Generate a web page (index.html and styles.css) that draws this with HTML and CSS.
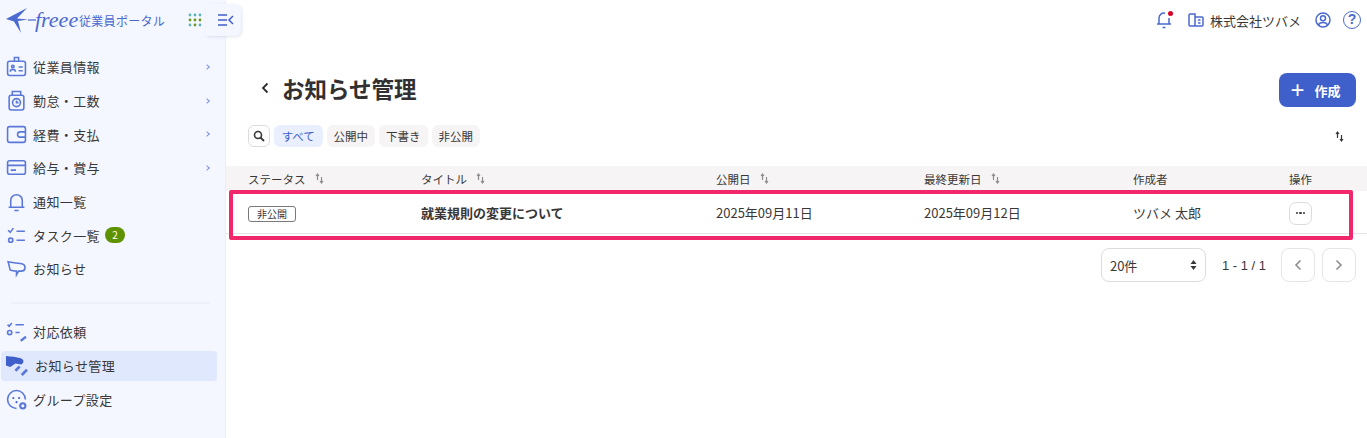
FILE: index.html
```html
<!DOCTYPE html>
<html lang="ja">
<head>
  <meta charset="UTF-8">
  <title>お知らせ管理</title>
  <link rel="stylesheet" href="styles.css">
</head>
<body>
<div class="app">
  <aside class="sidebar">
    <div class="brand">
      <svg class="brand-bird" width="32" height="30" viewBox="0 0 32 30" fill="none"><path d="M0 14 L21 3 L11 13.500 L22 14.500 L12 16 L15 28 L8 16.500 Z" fill="#4a6ad0"/><path d="M22 15h8" stroke="#4a6ad0" stroke-width="1.200"/></svg>
      <span class="brand-name">freee</span>
      <span class="brand-text">従業員ポータル</span>
      <svg class="brand-apps" width="14" height="14" viewBox="0 0 14 14">
        <g fill="#5bb5b8"><circle cx="2" cy="2" r="1.400"/><circle cx="7" cy="2" r="1.400"/><circle cx="12" cy="2" r="1.400"/></g>
        <g fill="#6c9a1e"><circle cx="2" cy="7" r="1.400"/><circle cx="7" cy="7" r="1.400"/><circle cx="12" cy="7" r="1.400"/></g>
        <g fill="#5bb5b8"><circle cx="2" cy="12" r="1.400"/></g><g fill="#6c9a1e"><circle cx="7" cy="12" r="1.400"/></g><g fill="#5bb5b8"><circle cx="12" cy="12" r="1.400"/></g>
      </svg>
    </div>
    <nav class="nav">
      <a class="nav-item">
        <svg class="nav-icon" viewBox="0 0 20 20"><rect x="1.500" y="5" width="17" height="13.500" rx="2"/><path d="M8 5V1.500h4V5"/><circle cx="6.500" cy="10" r="1.200"/><path d="M4 15c.3-3 4.700-3 5 0M12 10.500h4M12 14h4"/></svg>
        <span>従業員情報</span><i class="chev"></i>
      </a>
      <a class="nav-item">
        <svg class="nav-icon" viewBox="0 0 20 20"><rect x="3" y="5" width="14" height="14" rx="2"/><path d="M6 5V1.500h8V5"/><circle cx="10" cy="12" r="3.800"/><path d="M10 10v2h2"/></svg>
        <span>勤怠・工数</span><i class="chev"></i>
      </a>
      <a class="nav-item">
        <svg class="nav-icon" viewBox="0 0 20 20"><rect x="1.500" y="2.500" width="17" height="15" rx="2"/><path d="M18.500 7.500h-5a2.500 2.500 0 0 0 0 5h5"/></svg>
        <span>経費・支払</span><i class="chev"></i>
      </a>
      <a class="nav-item">
        <svg class="nav-icon" viewBox="0 0 20 20"><rect x="1.500" y="3.500" width="17" height="13" rx="2"/><path d="M1.500 8h17M4.500 12.500h5"/></svg>
        <span>給与・賞与</span><i class="chev"></i>
      </a>
      <a class="nav-item">
        <svg class="nav-icon" viewBox="0 0 20 20"><path d="M2.500 15.500h15M4.500 15.500V9a5.500 5.500 0 0 1 11 0v6.500M8 18.500h4"/></svg>
        <span>通知一覧</span>
      </a>
      <a class="nav-item">
        <svg class="nav-icon" viewBox="0 0 20 20"><path d="M2 5l2 2 3-4M10 6h8M10 14.500h8"/><circle cx="4.500" cy="14.500" r="2"/></svg>
        <span>タスク一覧</span><b class="count">2</b>
      </a>
      <a class="nav-item">
        <svg class="nav-icon" viewBox="0 0 20 20"><path d="M2 3.500c5 1 10 1.500 13 2 2 .4 3.500 2 3 4.500-.3 1.600-2 2.500-3.500 2.500H12l-2 3.500v-3.500c-3 0-5-.5-6-1z"/></svg>
        <span>お知らせ</span>
      </a>
      <hr class="nav-divider">
      <a class="nav-item">
        <svg class="nav-icon" viewBox="0 0 20 20"><path d="M1.500 3.500l1.500 1.500 2.500-3M9 3.500h8M9 11h4"/><path d="M14 19l5-4" stroke-width="2.200"/><circle cx="3.500" cy="11" r="2"/></svg>
        <span>対応依頼</span>
      </a>
      <a class="nav-item active">
        <svg class="nav-icon" viewBox="0 0 20 20"><path class="solid" d="M0 1c5 .5 10 1 14 2 2 .6 3 2 2.500 4-.4 1-1 1.500-2 2L9 8 4 11.500 0 10z"/><path d="M9 15l4-4M15 19l5-5" stroke-width="2.500"/></svg>
        <span>お知らせ管理</span>
      </a>
      <a class="nav-item">
        <svg class="nav-icon" viewBox="0 0 20 20"><path d="M18.500 10A8.500 8.500 0 1 0 10 18.500"/><circle cx="7" cy="8.500" r="1" class="solid"/><circle cx="12.500" cy="8.500" r="1" class="solid"/><circle cx="10" cy="12.500" r="1" class="solid"/><circle cx="16" cy="16" r="2.500" stroke-width="2"/></svg>
        <span>グループ設定</span>
      </a>
    </nav>
  </aside>

  <main class="main">
    <header class="topbar">
      <span class="bell">
        <svg class="top-icon" width="16" height="18" viewBox="0 0 16 18"><path d="M1 13h14M3 13V7a5 5 0 0 1 6-4.800M13 7v6M6.500 16.500h3"/></svg>
        <i class="bell-dot"></i>
      </span>
      <span class="company">
        <svg class="top-icon" width="16" height="14" viewBox="0 0 16 14"><path d="M7 1H2a1 1 0 0 0-1 1v10a1 1 0 0 0 1 1h5zM7 4h7a1 1 0 0 1 1 1v7a1 1 0 0 1-1 1H7M10 7h2.500M10 10h2.500"/></svg>
        株式会社ツバメ
      </span>
      <svg class="top-icon user" width="16" height="16" viewBox="0 0 16 16"><circle cx="8" cy="8" r="7"/><circle cx="8" cy="6.200" r="2.500"/><path d="M3.500 13c1-3.500 8-3.500 9 0"/></svg>
      <span class="help">?</span>
    </header>

    <div class="title-row">
      <div class="title">
        <svg width="8" height="12" viewBox="0 0 8 12" fill="none"><path d="M6.500 1.500L2 6l4.500 4.500" stroke="#2f2c2c" stroke-width="1.800"/></svg>
        <h1>お知らせ管理</h1>
      </div>
      <button class="create"><span class="plus">+</span>作成</button>
    </div>

    <div class="filter-row">
      <div class="filters">
        <span class="search">
          <svg width="12" height="12" viewBox="0 0 12 12" fill="none"><circle cx="5" cy="5" r="3.500" stroke="#3a3737" stroke-width="1.600"/><path d="M7.500 7.500L11 11" stroke="#3a3737" stroke-width="1.800"/></svg>
        </span>
        <span class="chip current">すべて</span>
        <span class="chip">公開中</span>
        <span class="chip">下書き</span>
        <span class="chip">非公開</span>
      </div>
      <svg class="sort dark" width="9" height="11" viewBox="0 0 9 11"><path d="M2.500 7V1.500M1 3l1.500-2L4 3M6.500 4v6M5 8l1.500 2L8 8"/></svg>
    </div>

    <div class="table">
      <div class="thead">
        <div class="th">ステータス<svg class="sort" width="9" height="11" viewBox="0 0 9 11"><path d="M2.500 7V1.500M1 3l1.500-2L4 3M6.500 4v6M5 8l1.500 2L8 8"/></svg></div>
        <div class="th">タイトル<svg class="sort" width="9" height="11" viewBox="0 0 9 11"><path d="M2.500 7V1.500M1 3l1.500-2L4 3M6.500 4v6M5 8l1.500 2L8 8"/></svg></div>
        <div class="th">公開日<svg class="sort" width="9" height="11" viewBox="0 0 9 11"><path d="M2.500 7V1.500M1 3l1.500-2L4 3M6.500 4v6M5 8l1.500 2L8 8"/></svg></div>
        <div class="th">最終更新日<svg class="sort" width="9" height="11" viewBox="0 0 9 11"><path d="M2.500 7V1.500M1 3l1.500-2L4 3M6.500 4v6M5 8l1.500 2L8 8"/></svg></div>
        <div class="th">作成者</div>
        <div class="th">操作</div>
      </div>
      <div class="tbody">
        <div class="td"><span class="status">非公開</span></div>
        <div class="td strong">就業規則の変更について</div>
        <div class="td">2025年09月11日</div>
        <div class="td">2025年09月12日</div>
        <div class="td">ツバメ 太郎</div>
        <div class="td"><button class="more"><i></i><i></i><i></i></button></div>
      </div>
    </div>

    <div class="pager">
      <div class="per-page">20件
        <svg width="7" height="12" viewBox="0 0 7 12" fill="#3a3737"><path d="M3.500 1L6.500 5h-6zM3.500 11L.5 7h6z"/></svg>
      </div>
      <span class="range">1 - 1 / 1</span>
      <button class="page-btn"><svg width="8" height="12" viewBox="0 0 8 12" fill="none"><path d="M6.500 1.500L2 6l4.500 4.500" stroke="#8f8c8c" stroke-width="1.600"/></svg></button>
      <button class="page-btn"><svg width="8" height="12" viewBox="0 0 8 12" fill="none"><path d="M1.500 1.500L6 6l-4.500 4.500" stroke="#8f8c8c" stroke-width="1.600"/></svg></button>
    </div>
  </main>
</div>

<!-- sidebar collapse tab sits over the sidebar edge -->
<div class="collapse-tab">
  <svg width="16" height="12" viewBox="0 0 16 12" fill="none" stroke="#3f5fcb" stroke-width="1.500"><path d="M0 1h9M0 6h9M0 11h9M15 2l-4 4 4 4"/></svg>
</div>
<!-- annotation frame drawn over the table row -->
<div class="highlight"></div>
</body>
</html>
```

FILE: styles.css
```css
* {
  box-sizing: border-box;
}

body {
  margin: 0;
  height: 438px;
  overflow: hidden;
  background: #fff;
  color: #3a3737;
  font-family: "Noto Sans CJK JP", "Noto Sans", sans-serif;
  font-size: 13px;
  position: relative;
}

button {
  font-family: inherit;
}

.app {
  display: flex;
  height: 100%;
}

/* sidebar */
.sidebar {
  width: 226px;
  flex: none;
  background: #f4f7ff;
  border-right: 1px solid #ebeef6;
}

.brand {
  display: flex;
  align-items: center;
  height: 40px;
  padding-left: 6px;
  color: #4a6ad0;
}

.brand-bird {
  flex: none;
  margin-right: -3px;
}

.brand-name {
  width: 44px;
  font-family: "Liberation Serif", serif;
  font-style: italic;
  font-size: 22px;
  line-height: 24px;
  color: #4a6ad0;
}

.brand-text {
  font-size: 12px;
  letter-spacing: 0.300px;
  color: #4a6ad0;
  white-space: nowrap;
}

.brand-apps {
  margin-left: 23px;
  flex: none;
}

.nav {
  display: flex;
  flex-direction: column;
  padding: 10px 0 0 1px;
}

.nav-item {
  position: relative;
  display: flex;
  align-items: center;
  height: 33.700px;
  width: 216px;
  padding-left: 5px;
  border-radius: 4px;
  letter-spacing: 0.400px;
  color: #3a3737;
}

.nav-item span {
  white-space: nowrap;
}

.nav-icon {
  width: 21px;
  height: 21px;
  flex: none;
  margin-right: 6px;
  fill: none;
  stroke: #5a78d8;
  stroke-width: 1.500;
  overflow: visible;
}

.nav-icon .solid {
  fill: #3f5fcb;
  stroke: none;
}

.chev {
  position: absolute;
  right: 8px;
  width: 4px;
  height: 4px;
  border-top: 1.500px solid #7c93e0;
  border-right: 1.500px solid #7c93e0;
  transform: rotate(45deg);
}

.count {
  margin-left: 5px;
  width: 20px;
  height: 16px;
  border-radius: 8px;
  background: #5f9200;
  color: #fff;
  font-size: 10px;
  font-weight: 400;
  line-height: 16px;
  text-align: center;
  letter-spacing: 0;
}

.nav-divider {
  width: 198px;
  height: 2px;
  margin: 16px 0 11px 10px;
  border: 0;
  background: #ebeff9;
}

.nav-item.active {
  background: #dfe8fd;
  height: 30px;
  margin: 2px 0;
}

.nav-item.active span {
  margin-left: 2px;
}

/* header area */
.main {
  flex: 1;
  min-width: 0;
}

.topbar {
  display: flex;
  align-items: center;
  justify-content: flex-end;
  height: 40px;
  padding-right: 6px;
  font-size: 13px;
}

.top-icon {
  fill: none;
  stroke: #4a6ad0;
  stroke-width: 1.500;
  flex: none;
}

.bell {
  position: relative;
  display: flex;
  margin-right: 16px;
}

.bell-dot {
  position: absolute;
  top: 0;
  right: -1px;
  width: 5px;
  height: 5px;
  border-radius: 50%;
  background: #d7002a;
}

.company {
  display: flex;
  align-items: center;
  gap: 6px;
  margin-right: 14px;
  white-space: nowrap;
}

.user {
  margin-right: 12px;
}

.help {
  width: 18px;
  height: 18px;
  border: 1.800px solid #4a6ad0;
  border-radius: 50%;
  color: #4a6ad0;
  font-family: "Liberation Sans", sans-serif;
  font-size: 14px;
  font-weight: 700;
  line-height: 15px;
  text-align: center;
}

.title-row {
  display: flex;
  align-items: center;
  justify-content: space-between;
  height: 34px;
  margin-top: 33px;
  padding: 0 11px 0 35px;
}

.title {
  display: flex;
  align-items: center;
  gap: 13px;
  margin-bottom: 4px;
}

.title h1 {
  margin: 0;
  font-size: 22.500px;
  font-weight: 700;
  line-height: 34px;
  color: #323030;
}

.create {
  display: flex;
  align-items: center;
  justify-content: center;
  width: 77px;
  height: 34px;
  padding: 0 4px 0 0;
  border: 0;
  border-radius: 8px;
  background: #3f5fcb;
  color: #fff;
  font-size: 13px;
  font-weight: 700;
}

.plus {
  margin-right: 10px;
  font-family: "Liberation Sans", sans-serif;
  font-size: 24px;
  font-weight: 400;
  line-height: 24px;
}

.filter-row {
  display: flex;
  align-items: center;
  justify-content: space-between;
  height: 22px;
  margin-top: 18px;
  padding: 0 23px 0 22px;
}

.filters {
  display: flex;
  align-items: center;
  gap: 4px;
}

.search {
  display: flex;
  align-items: center;
  justify-content: center;
  width: 22px;
  height: 22px;
  border: 1px solid #dedbdb;
  border-radius: 6px;
}

.chip {
  width: 48.500px;
  height: 22px;
  border-radius: 6px;
  background: #f6f4f4;
  font-size: 11.500px;
  line-height: 22px;
  text-align: center;
  white-space: nowrap;
}

.chip.current {
  background: #e9effe;
  color: #3f5fcb;
}

.sort {
  margin-left: 9px;
  fill: none;
  stroke: #8f8c8c;
  stroke-width: 1.200;
  flex: none;
}

.sort.dark {
  stroke: #3a3737;
  margin-left: 0;
}

/* table */
.table {
  margin-top: 19px;
}

.thead,
.tbody {
  display: grid;
  grid-template-columns: 173px 295px 208px 209px 156px 1fr;
  padding-left: 22px;
  align-items: center;
}

.thead {
  height: 25px;
  background: #f6f4f4;
  font-size: 11.500px;
}

.th {
  display: flex;
  align-items: center;
}

.tbody {
  height: 43px;
  border-bottom: 1px solid #e6e4e4;
}

.td {
  white-space: nowrap;
}

.td.strong {
  font-weight: 700;
}

.status {
  display: inline-block;
  width: 48px;
  height: 16px;
  border: 1px solid #7b7878;
  border-radius: 3px;
  font-size: 10px;
  line-height: 14px;
  text-align: center;
}

.more {
  display: flex;
  align-items: center;
  justify-content: center;
  gap: 1px;
  width: 23px;
  height: 23px;
  margin-top: 2px;
  padding: 0;
  border: 1px solid #dedbdb;
  border-radius: 7px;
  background: #fff;
}

.more i {
  width: 2.500px;
  height: 2.500px;
  border-radius: 50%;
  background: #3a3737;
}

.pager {
  display: flex;
  align-items: center;
  justify-content: flex-end;
  margin-top: 14px;
  padding-right: 11px;
}

.per-page {
  display: flex;
  align-items: center;
  justify-content: space-between;
  width: 105px;
  height: 34px;
  padding: 0 8px;
  border: 1px solid #dedbdb;
  border-radius: 8px;
}

.range {
  margin: 0 15px 0 16px;
  font-family: "Liberation Sans", sans-serif;
  font-size: 13px;
  white-space: nowrap;
}

.page-btn {
  display: flex;
  align-items: center;
  justify-content: center;
  width: 34px;
  height: 34px;
  margin-left: 7px;
  border: 1px solid #e6e4e4;
  border-radius: 8px;
  background: #fff;
}

.range + .page-btn {
  margin-left: 0;
}

/* overlays */
.collapse-tab {
  position: absolute;
  top: 4px;
  left: 206px;
  display: flex;
  align-items: center;
  justify-content: center;
  width: 35px;
  height: 32px;
  padding-left: 4px;
  border-radius: 0 6px 6px 0;
  background: #f4f7ff;
  box-shadow: 1px 1px 3px rgba(60, 80, 140, 0.15);
}

.highlight {
  position: absolute;
  top: 190px;
  left: 229px;
  width: 1124px;
  height: 50px;
  border: 4px solid #f2266a;
  border-radius: 2px;
}
```
